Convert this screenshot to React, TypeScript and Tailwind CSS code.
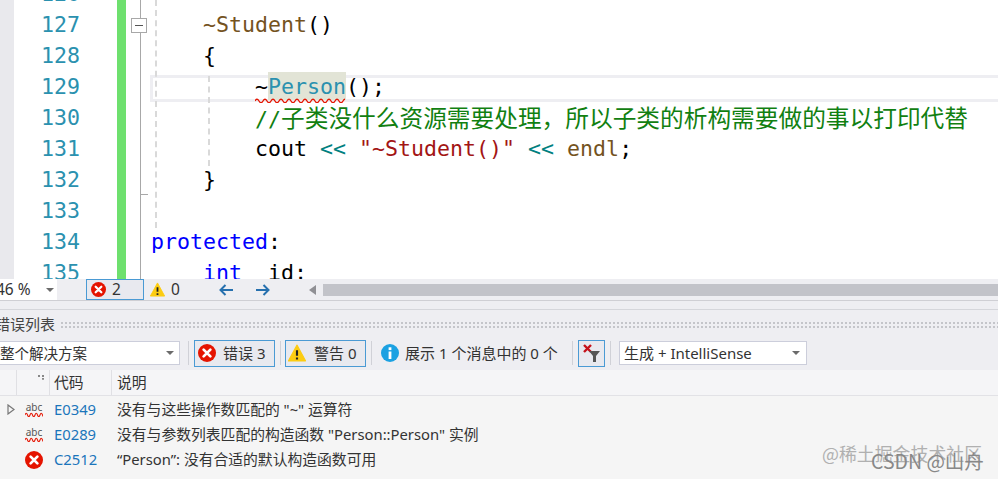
import React from "react";

const ui = { fontFamily: '"Noto Sans", "Noto Sans CJK SC", sans-serif' };
const cjk = { fontFamily: '"Noto Sans CJK SC", sans-serif' };
const mono = { fontFamily: '"DejaVu Sans Mono", "Noto Sans CJK SC", monospace' };

function ErrIcon({ s = 16 }: { s?: number }) {
  return (
    <svg width={s} height={s} viewBox="0 0 16 16" className="shrink-0">
      <circle cx="8" cy="8" r="8" fill="#e51400" />
      <path d="M5 5l6 6M11 5l-6 6" stroke="#fff" strokeWidth="2.4" strokeLinecap="round" />
    </svg>
  );
}
function WarnIcon({ s = 16 }: { s?: number }) {
  return (
    <svg width={s} height={s} viewBox="0 0 16 16" className="shrink-0">
      <path d="M8 1L15.6 15H.4z" fill="#fccc11" stroke="#fccc11" strokeLinejoin="round" />
      <path d="M8 5.500v5M8 12v1.800" stroke="#222" strokeWidth="1.900" />
    </svg>
  );
}
function Caret() {
  return (
    <svg width="8" height="4" viewBox="0 0 8 4">
      <path d="M0 0h8L4 4z" fill="#6b6b6b" />
    </svg>
  );
}
function Squiggle({ w, wave = 8, sw = 1.3 }: { w: number; wave?: number; sw?: number }) {
  let d = "M0 3";
  for (let x = 0; x < w; x += wave) d += ` q${wave / 4} -3.500 ${wave / 2} 0 t${wave / 2} 0`;
  return (
    <svg width={w} height="5" viewBox={`0 0 ${w} 5`} className="block">
      <path d={d} fill="none" stroke="#e51400" strokeWidth={sw} />
    </svg>
  );
}
function Abc() {
  return (
    <div className="flex w-[18px] flex-col items-center leading-none">
      <span className="text-[10px] leading-[9px] text-[#555]" style={ui}>abc</span>
      <Squiggle w={18} wave={5} sw={1.1} />
    </div>
  );
}
function Sep() {
  return <div className="mx-[5px] h-[24px] w-px shrink-0 bg-[#d0d1d7]" />;
}

const k = "text-[#0000ff]";
const c = "text-[#2b91af]";
const f = "text-[#74531f]";
const o = "text-[#008080]";

const rows: [number, React.ReactNode][] = [
  [126, ""],
  [127, <>{"    "}<span className={f}>~Student</span>()</>],
  [128, <>{"    "}{"{"}</>],
  [129, (
    <>
      {"        ~"}
      <span className="relative inline-block">
        <span className="absolute left-0 top-[1px] h-[28px] w-[78px] bg-[#e2e4d6]" />
        <span className={`relative ${c}`}>Person</span>
        <span className="absolute -left-[13px] top-[27px]"><Squiggle w={90} /></span>
      </span>
      ();
    </>
  )],
  [130, <>{"        "}<span className="text-[#118011]"><span>//</span><span className="text-[23.7px]" style={cjk}>子类没什么资源需要处理，所以子类的析构需要做的事以打印代替</span></span></>],
  [131, <>{"        cout "}<span className={o}>{"<<"}</span>{" "}<span className="text-[#a31515]">"~Student()"</span>{" "}<span className={o}>{"<<"}</span>{" "}<span className={f}>endl</span>;</>],
  [132, <>{"    }"}</>],
  [133, ""],
  [134, <><span className={k}>protected</span>:</>],
  [135, <>{"    "}<span className={k}>int</span>{" _id;"}</>],
];

export default function App() {
  return (
    <div className="relative flex h-[479px] w-[998px] flex-col overflow-hidden bg-[#eeeef2] text-[#333]" style={ui}>
      {/* Editor */}
      <div className="relative h-[279px] shrink-0 overflow-hidden bg-white">
        <div className="-mt-[22px] flex flex-col">
          {rows.map(([n, code]) => (
            <div key={n} className="flex h-[31px] shrink-0 text-[21.6px] leading-[31px] text-black" style={mono}>
              <div className="h-full w-[14px] shrink-0 bg-[#e9e9ed]" />
              <div className="w-[66px] shrink-0 text-right text-[#2b91af]">{n}</div>
              <div className="w-[37px] shrink-0" />
              <div className="h-full w-[9px] shrink-0 bg-[#6ee06e]" />
              <div className="relative ml-[14px] h-full w-[10px] shrink-0 border-l border-[#a8a8a8]">
                {n === 127 && (
                  <div className="absolute -left-[10px] top-[9px] flex h-[15px] w-[16px] items-center justify-center border border-[#a8a8a8] bg-white">
                    <div className="h-px w-[8px] bg-[#555]" />
                  </div>
                )}
                {n === 132 && <div className="absolute bottom-0 left-0 h-px w-[7px] bg-[#a8a8a8]" />}
              </div>
              <div className="relative flex-1 whitespace-pre pl-px">
                {n === 129 && <div className="absolute inset-x-0 top-[4px] h-[27px] border-y-[3px] border-l-[3px] border-[#eeeef2]" />}
                <span className="relative">{code}</span>
              </div>
            </div>
          ))}
        </div>
        {/* indent guides */}
        <div className="absolute left-[155px] top-0 h-[228px] border-l-2 border-dashed border-[#d9d9d9]" />
        <div className="absolute left-[208px] top-[76px] h-[90px] border-l-2 border-dashed border-[#d9d9d9]" />
      </div>

      {/* Editor status strip */}
      <div className="flex h-[22px] shrink-0 items-stretch border-b border-[#cfcfd4] text-[15.5px] leading-none">
        <div className="-ml-[7px] flex w-[64px] shrink-0 items-center justify-between bg-white pl-[3px] pr-[3px]">
          <span>46 %</span>
          <Caret />
        </div>
        <div className="ml-[29px] flex w-[58px] shrink-0 items-center gap-[6px] border border-[#4a9ad4] bg-[#e8e9ef] pl-[4px]">
          <ErrIcon s={15} />
          <span>2</span>
        </div>
        <div className="ml-[6px] flex items-center gap-[6px]">
          <WarnIcon s={15} />
          <span>0</span>
        </div>
        <div className="ml-[39px] flex items-center gap-[21px]">
          <svg width="15" height="12" viewBox="0 0 15 12"><path d="M14 6H2M6.500 1L1.500 6l5 5" fill="none" stroke="#2670ae" strokeWidth="2" /></svg>
          <svg width="15" height="12" viewBox="0 0 15 12"><path d="M1 6h12M8.500 1l5 5-5 5" fill="none" stroke="#2670ae" strokeWidth="2" /></svg>
        </div>
        <div className="ml-[39px] flex flex-1 items-center">
          <svg width="8" height="10" viewBox="0 0 8 10"><path d="M7 0v10L0 5z" fill="#8f8f94" /></svg>
          <div className="ml-[6px] h-[12px] flex-1 bg-[#c2c3c9]" />
        </div>
      </div>

      {/* Error list panel */}
      <div className="mt-[8px] flex flex-1 flex-col border-t border-[#d5d6db]">
        <div className="flex h-[29px] shrink-0 items-center pb-[2px] pt-px">
          <span className="-ml-[5px] text-[15px] text-[#444]" style={cjk}>错误列表</span>
          <div className="ml-[5px] h-[7px] flex-1 bg-[radial-gradient(#c4c5ca_1px,transparent_1px)] bg-[length:4px_4px]" />
        </div>

        <div className="flex h-[28px] shrink-0 items-center text-[15px] leading-none">
          <div className="flex h-[24px] w-[180px] shrink-0 items-center justify-between border border-l-0 border-[#cccedb] bg-white pr-[5px]">
            <span className="text-[14.5px]">整个解决方案</span>
            <Caret />
          </div>
          <div className="ml-[3px]"><Sep /></div>
          <div className="flex h-[27px] w-[81px] shrink-0 items-center gap-[7px] border border-[#4a9ad4] bg-[#e8e9ef] pl-[3px]">
            <ErrIcon s={18} />
            <span>错误 3</span>
          </div>
          <div className="-mr-px"><Sep /></div>
          <div className="flex h-[27px] w-[81px] shrink-0 items-center gap-[8px] border border-[#4a9ad4] bg-[#e8e9ef] pl-[2px]">
            <WarnIcon s={18} />
            <span>警告 0</span>
          </div>
          <Sep />
          <svg width="18" height="18" viewBox="0 0 18 18" className="ml-[4px] shrink-0">
            <circle cx="9" cy="9" r="9" fill="#1ba1e2" />
            <rect x="7.600" y="7.500" width="2.800" height="7.500" fill="#fff" />
            <rect x="7.600" y="3.300" width="2.800" height="2.800" fill="#fff" />
          </svg>
          <span className="ml-[6px] w-[160px] shrink-0 whitespace-pre">展示 1 个消息中的 0 个</span>
          <div className="ml-[2px]"><Sep /></div>
          <div className="flex h-[27px] w-[27px] shrink-0 items-center justify-center border border-[#4a9ad4] bg-[#e8e9ef]">
            <svg width="18" height="18" viewBox="0 0 18 18">
              <path d="M1 1l7 7M8 1l-7 7" stroke="#c5121b" strokeWidth="2.400" />
              <path d="M6 7h11l-4 5v6h-3v-6z" fill="#555" />
            </svg>
          </div>
          <Sep />
          <div className="ml-[3px] flex h-[24px] w-[188px] shrink-0 items-center justify-between border border-[#cccedb] bg-white pl-[4px] pr-[6px]">
            <span>生成 + IntelliSense</span>
            <Caret />
          </div>
        </div>

        <div className="mt-[3px] flex flex-1 flex-col bg-[#f5f5f5] text-[14.8px]">
          <div className="flex h-[26px] shrink-0 items-center border-b border-[#e2e2e6] bg-[#f5f5f7]">
            <div className="h-full w-[17px] border-r border-[#e0e0e4]" />
            <div className="relative h-full w-[33px] border-r border-[#e0e0e4]">
              <div className="absolute right-[5px] top-[5px] h-[5px] w-[6px] border-t-2 border-r-2 border-dotted border-[#888]" />
            </div>
            <div className="flex h-full w-[62px] items-center border-r border-[#e0e0e4] pl-[4px]">代码</div>
            <div className="pl-[5px]">说明</div>
          </div>
          <div className="mt-[1px] flex flex-col">
            {[
              { icon: <Abc />, code: "E0349", text: '没有与这些操作数匹配的 "~" 运算符', arrow: true },
              { icon: <Abc />, code: "E0289", text: '没有与参数列表匹配的构造函数 "Person::Person" 实例', arrow: false },
              { icon: <ErrIcon s={18} />, code: "C2512", text: "“Person”: 没有合适的默认构造函数可用", arrow: false },
            ].map((r) => (
              <div key={r.code} className="flex h-[25px] items-center">
                <div className="flex w-[25px] justify-end pr-[10px]">
                  {r.arrow && (
                    <svg width="8" height="11" viewBox="0 0 8 11"><path d="M1 1l6 4.500-6 4.500z" fill="none" stroke="#777" strokeWidth="1.200" /></svg>
                  )}
                </div>
                <div className="flex w-[29px] justify-center pr-[11px]">{r.icon}</div>
                <div className="w-[63px] text-[#1b75bb]">{r.code}</div>
                <div className="whitespace-pre">{r.text}</div>
              </div>
            ))}
          </div>
        </div>
      </div>

      {/* Watermarks */}
      <div className="pointer-events-none absolute left-[822px] top-[442px] text-[17.9px] leading-[22px] text-[#b0b0b0]" style={cjk}>@稀土掘金技术社区</div>
      <div className="pointer-events-none absolute left-[871px] top-[450px] text-[19.5px] leading-[22px] text-[#888]" style={cjk}>CSDN @山舟</div>
    </div>
  );
}
